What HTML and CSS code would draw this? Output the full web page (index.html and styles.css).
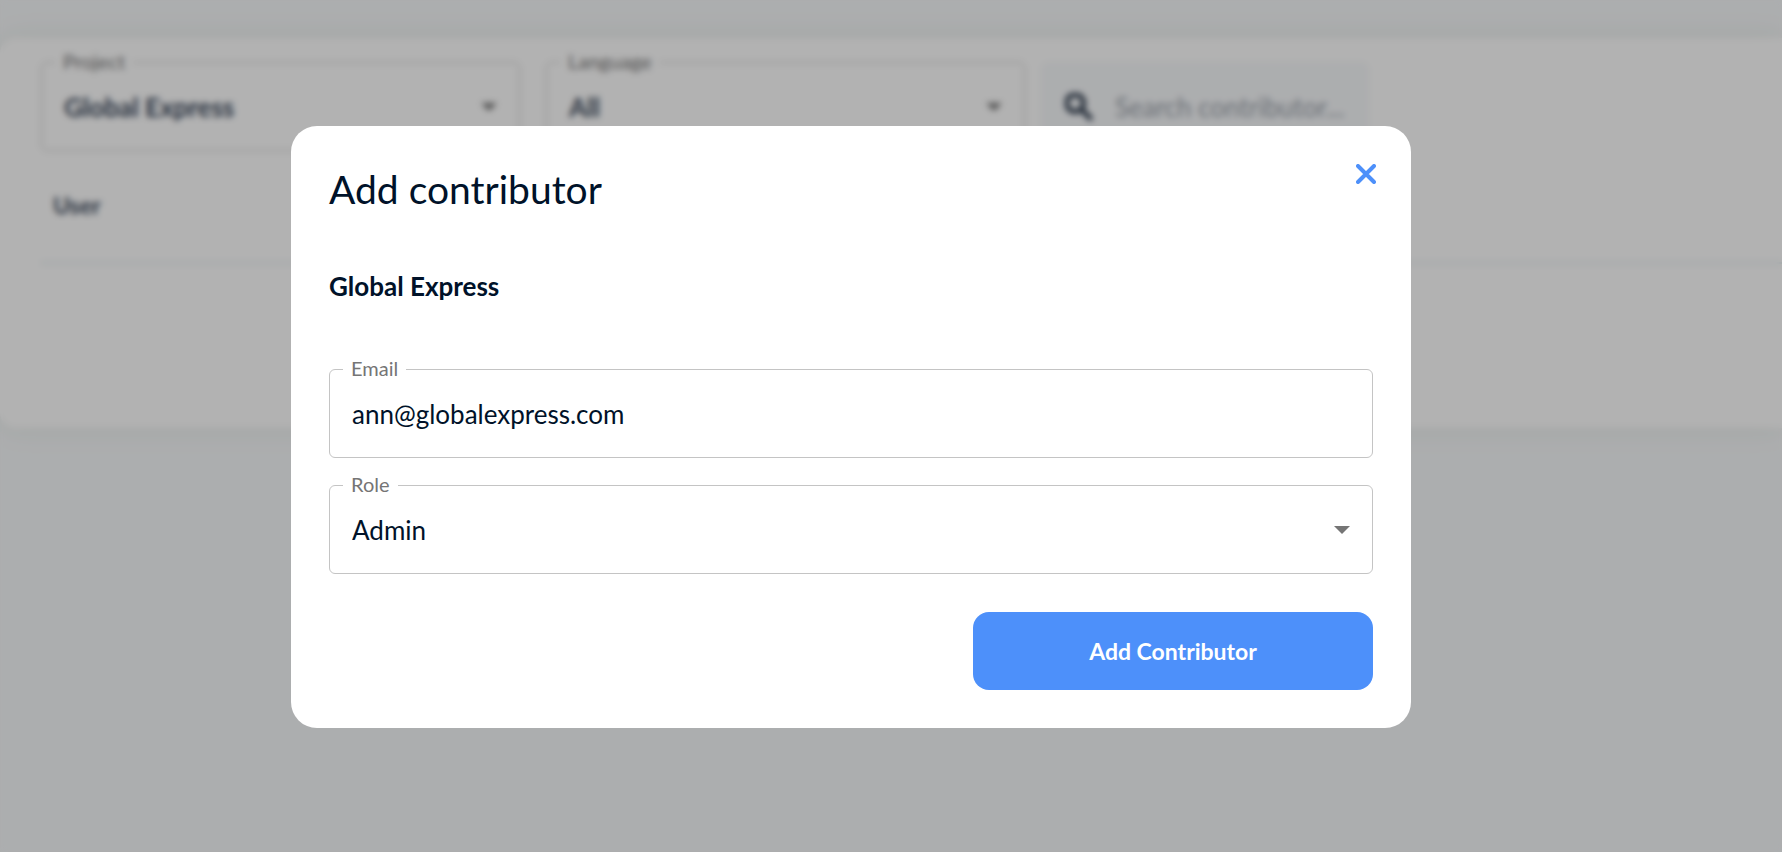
FILE: index.html
```
<!DOCTYPE html>
<html lang="en">
<head>
<meta charset="utf-8">
<meta name="viewport" content="width=device-width, initial-scale=1">
<title>Contributors</title>
<link rel="stylesheet" href="styles.css">
</head>
<body>
<main class="panel">
  <div class="filters">
    <div class="field filter">
      <label class="field-label" for="project">Project</label>
      <select class="control strong" id="project"><option>Global Express</option></select>
      <svg class="arrow" viewBox="0 0 16 8" aria-hidden="true"><path d="M0 0h16L8 8z"/></svg>
    </div>
    <div class="field filter">
      <label class="field-label" for="language">Language</label>
      <select class="control strong" id="language"><option>All</option></select>
      <svg class="arrow" viewBox="0 0 16 8" aria-hidden="true"><path d="M0 0h16L8 8z"/></svg>
    </div>
    <div class="search">
      <svg class="search-icon" viewBox="3 3 18 18" aria-hidden="true"><path d="M15.5 14h-.79l-.28-.27A6.471 6.471 0 0 0 16 9.500 6.500 6.500 0 1 0 9.500 16c1.610 0 3.090-.59 4.230-1.570l.27.28v.79l5 4.990L20.490 19l-4.990-5zm-6 0C7.010 14 5 11.990 5 9.500S7.010 5 9.500 5 14 7.010 14 9.500 11.990 14 9.500 14z"/></svg>
      <input class="search-input" type="text" placeholder="Search contributor..." aria-label="Search contributor">
    </div>
  </div>
  <table class="users">
    <thead><tr><th scope="col">User</th></tr></thead>
  </table>
</main>
<div class="overlay">
  <form class="dialog" role="dialog" aria-modal="true" aria-labelledby="dialog-title">
    <header class="dialog-head">
      <h1 class="dialog-title" id="dialog-title">Add contributor</h1>
      <button class="close" type="button" aria-label="Close">
        <svg class="close-icon" viewBox="0 0 20 20" aria-hidden="true"><path d="M2 2l16 16M18 2L2 18"/></svg>
      </button>
    </header>
    <h2 class="project-name">Global Express</h2>
    <div class="fields">
      <div class="field">
        <label class="field-label" for="email">Email</label>
        <input class="control" id="email" type="email" value="ann@globalexpress.com">
      </div>
      <div class="field">
        <label class="field-label" for="role">Role</label>
        <select class="control" id="role"><option>Admin</option></select>
        <svg class="arrow" viewBox="0 0 16 8" aria-hidden="true"><path d="M0 0h16L8 8z"/></svg>
      </div>
    </div>
    <button class="submit" type="button">Add Contributor</button>
  </form>
</div>
</body>
</html>
```
FILE: styles.css
```
* {
  box-sizing: border-box;
}

body {
  margin: 0;
  min-height: 100vh;
  padding-top: 38px;
  background: #f7f9fb;
  color: #001229;
  font-family: Lato, "Liberation Sans", sans-serif;
}

.panel {
  min-height: 390px;
  padding: 24px 0 0 41px;
  border-radius: 16px 0 0 16px;
  background: #fff;
  box-shadow: 0 0 28px rgba(120, 150, 90, 0.12);
}

.filters {
  display: flex;
  gap: 26px;
}

.filter {
  flex: 0 1 479px;
}

.field {
  position: relative;
}

.field-label {
  position: absolute;
  top: -13px;
  left: 14px;
  padding: 0 8px;
  background: #fff;
  color: #757575;
  font-size: 20px;
  line-height: 24px;
}

.control {
  display: block;
  width: 100%;
  height: 89px;
  margin: 0;
  padding: 0 22px;
  border: 1px solid #c4c4c4;
  border-radius: 6px;
  outline: 0;
  appearance: none;
  background: transparent;
  color: inherit;
  font: 400 26px/32px Lato, "Liberation Sans", sans-serif;
}

.strong {
  color: #3a475a;
  font-weight: 700;
}

.arrow {
  position: absolute;
  top: 41px;
  right: 23px;
  width: 16px;
  height: 8px;
  fill: #757575;
  pointer-events: none;
}

.search {
  display: flex;
  align-items: center;
  gap: 22px;
  flex: 0 1 328px;
  margin-left: -10px;
  padding: 0 8px 0 24px;
  border-radius: 8px;
  background: #f7f9fb;
}

.search-icon {
  flex: none;
  width: 28px;
  height: 28px;
  fill: #2c394b;
  stroke: #2c394b;
}

.search-input {
  width: 100%;
  min-width: 0;
  padding: 0;
  border: 0;
  outline: 0;
  appearance: none;
  background: transparent;
  font: 400 26px/32px Lato, "Liberation Sans", sans-serif;
}

.search-input::placeholder {
  color: #99a0a9;
}

.users {
  width: 100%;
  border-collapse: collapse;
}

.users th {
  height: 112px;
  padding: 0 12px 4px;
  border-bottom: 2px solid #e4eef2;
  color: #3a475a;
  font-size: 23px;
  text-align: left;
}

.overlay {
  position: fixed;
  inset: 0;
  display: flex;
  align-items: center;
  justify-content: center;
  padding: 2px 80px 0 0;
  background: rgba(0, 0, 0, 0.3);
  backdrop-filter: blur(3px);
}

.dialog {
  display: flex;
  flex-direction: column;
  width: 66%;
  max-width: 1120px;
  padding: 38px;
  border-radius: 26px;
  background: #fff;
}

.dialog-head {
  display: flex;
  align-items: flex-start;
  justify-content: space-between;
}

.dialog-title {
  margin: 0;
  font-size: 39px;
  font-weight: 400;
  line-height: 50px;
}

.close {
  display: flex;
  margin: -10px -13px 0 0;
  padding: 10px;
  border: 0;
  background: transparent;
  cursor: pointer;
}

.close-icon {
  width: 20px;
  height: 20px;
  fill: none;
  stroke: #4d90fa;
  stroke-width: 4;
  stroke-linecap: round;
}

.project-name {
  margin: 56px 0 0;
  font-size: 26px;
  font-weight: 700;
  line-height: 32px;
}

.fields {
  display: flex;
  flex-direction: column;
  gap: 27px;
  margin-top: 67px;
}

.submit {
  align-self: flex-end;
  width: 400px;
  max-width: 100%;
  height: 78px;
  margin-top: 38px;
  border: 0;
  border-radius: 16px;
  background: #4d90fa;
  color: #fff;
  font: 700 23px/28px Lato, "Liberation Sans", sans-serif;
  cursor: pointer;
}
```
